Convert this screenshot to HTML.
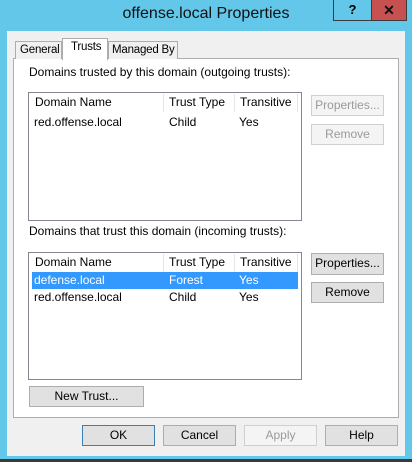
<!DOCTYPE html>
<html><head><style>
*{box-sizing:border-box;margin:0;padding:0}
body{width:412px;height:462px;background:#62c7e9;position:relative;overflow:hidden;font-family:"Liberation Sans",sans-serif;font-size:12px;color:#000}
.a{position:absolute;white-space:nowrap}
.title{left:0;width:412px;top:5px;text-align:center;font-size:16px;color:#111}
.btn{position:absolute;background:#e1e1e1;border:1px solid #adadad;text-align:center;line-height:19px;font-size:12px;white-space:nowrap}
.dis{background:#f4f4f4;border-color:#cfcfcf;color:#9a9a9a}
.list{position:absolute;background:#fff;border:1px solid #828790}
.hd{position:absolute;top:1px;height:18px;line-height:17px;border-right:1px solid #e5e5e5;padding-left:5px;white-space:nowrap}
.row{position:absolute;left:3px;width:266px;height:17px;line-height:17px}
.row span{position:absolute;white-space:nowrap}
.tab{font-size:11.5px;letter-spacing:-0.2px}
</style></head><body>
<div class="a title">offense.local Properties</div>
<div class="a" style="left:333px;top:0;width:39px;height:21px;border:1px solid #3b3b3b;border-top:none;background:#62c7e9;text-align:center;font-weight:bold;font-size:13px;line-height:20px">?</div>
<div class="a" style="left:371px;top:0;width:36px;height:21px;border:1px solid #3b3b3b;border-top:none;background:#c75050;text-align:center;font-weight:bold;font-size:14px;line-height:20px;color:#111">✕</div>
<div class="a" style="left:7px;top:31px;width:398px;height:425px;background:#f0f0f0"></div>
<div class="a" style="left:0;top:459px;width:412px;height:3px;background:#3a3a3a"></div>
<div class="a" style="left:13px;top:58px;width:386px;height:360px;background:#fff;border:1px solid #adadad"></div>
<div class="a tab" style="left:15px;top:41px;width:47px;height:18px;background:#f0f0f0;border:1px solid #adadad;border-bottom:none;padding-left:4px;line-height:17px">General</div>
<div class="a tab" style="left:108px;top:41px;width:70px;height:18px;background:#f0f0f0;border:1px solid #adadad;border-bottom:none;padding-left:3px;line-height:17px">Managed By</div>
<div class="a tab" style="left:62px;top:38px;width:46px;height:22px;background:#fff;border:1px solid #adadad;border-bottom:none;padding-left:8px;line-height:17px">Trusts</div>
<div class="a" style="left:29px;top:65px">Domains trusted by this domain (outgoing trusts):</div>
<div class="list" style="left:28px;top:92px;width:274px;height:129px">
 <div class="hd" style="left:1px;width:134px">Domain Name</div>
 <div class="hd" style="left:135px;width:71px">Trust Type</div>
 <div class="hd" style="left:206px;width:63px">Transitive</div>
 <div class="row" style="top:21px"><span style="left:2px">red.offense.local</span><span style="left:137px">Child</span><span style="left:207px">Yes</span></div>
</div>
<div class="btn dis" style="left:311px;top:95px;width:73px;height:21px">Properties...</div>
<div class="btn dis" style="left:311px;top:124px;width:73px;height:21px">Remove</div>
<div class="a" style="left:29px;top:224px">Domains that trust this domain (incoming trusts):</div>
<div class="list" style="left:28px;top:252px;width:274px;height:128px">
 <div class="hd" style="left:1px;width:134px">Domain Name</div>
 <div class="hd" style="left:135px;width:71px">Trust Type</div>
 <div class="hd" style="left:206px;width:63px">Transitive</div>
 <div class="row" style="top:19px;background:#3399ff;color:#fff"><span style="left:2px">defense.local</span><span style="left:137px">Forest</span><span style="left:207px">Yes</span></div>
 <div class="row" style="top:36px"><span style="left:2px">red.offense.local</span><span style="left:137px">Child</span><span style="left:207px">Yes</span></div>
</div>
<div class="btn" style="left:311px;top:253px;width:73px;height:22px">Properties...</div>
<div class="btn" style="left:311px;top:282px;width:73px;height:21px">Remove</div>
<div class="btn" style="left:29px;top:386px;width:115px;height:21px">New Trust...</div>
<div class="btn" style="left:82px;top:425px;width:73px;height:21px;border-color:#3c7fb1">OK</div>
<div class="btn" style="left:163px;top:425px;width:73px;height:21px">Cancel</div>
<div class="btn dis" style="left:244px;top:425px;width:73px;height:21px">Apply</div>
<div class="btn" style="left:325px;top:425px;width:73px;height:21px">Help</div>
</body></html>
